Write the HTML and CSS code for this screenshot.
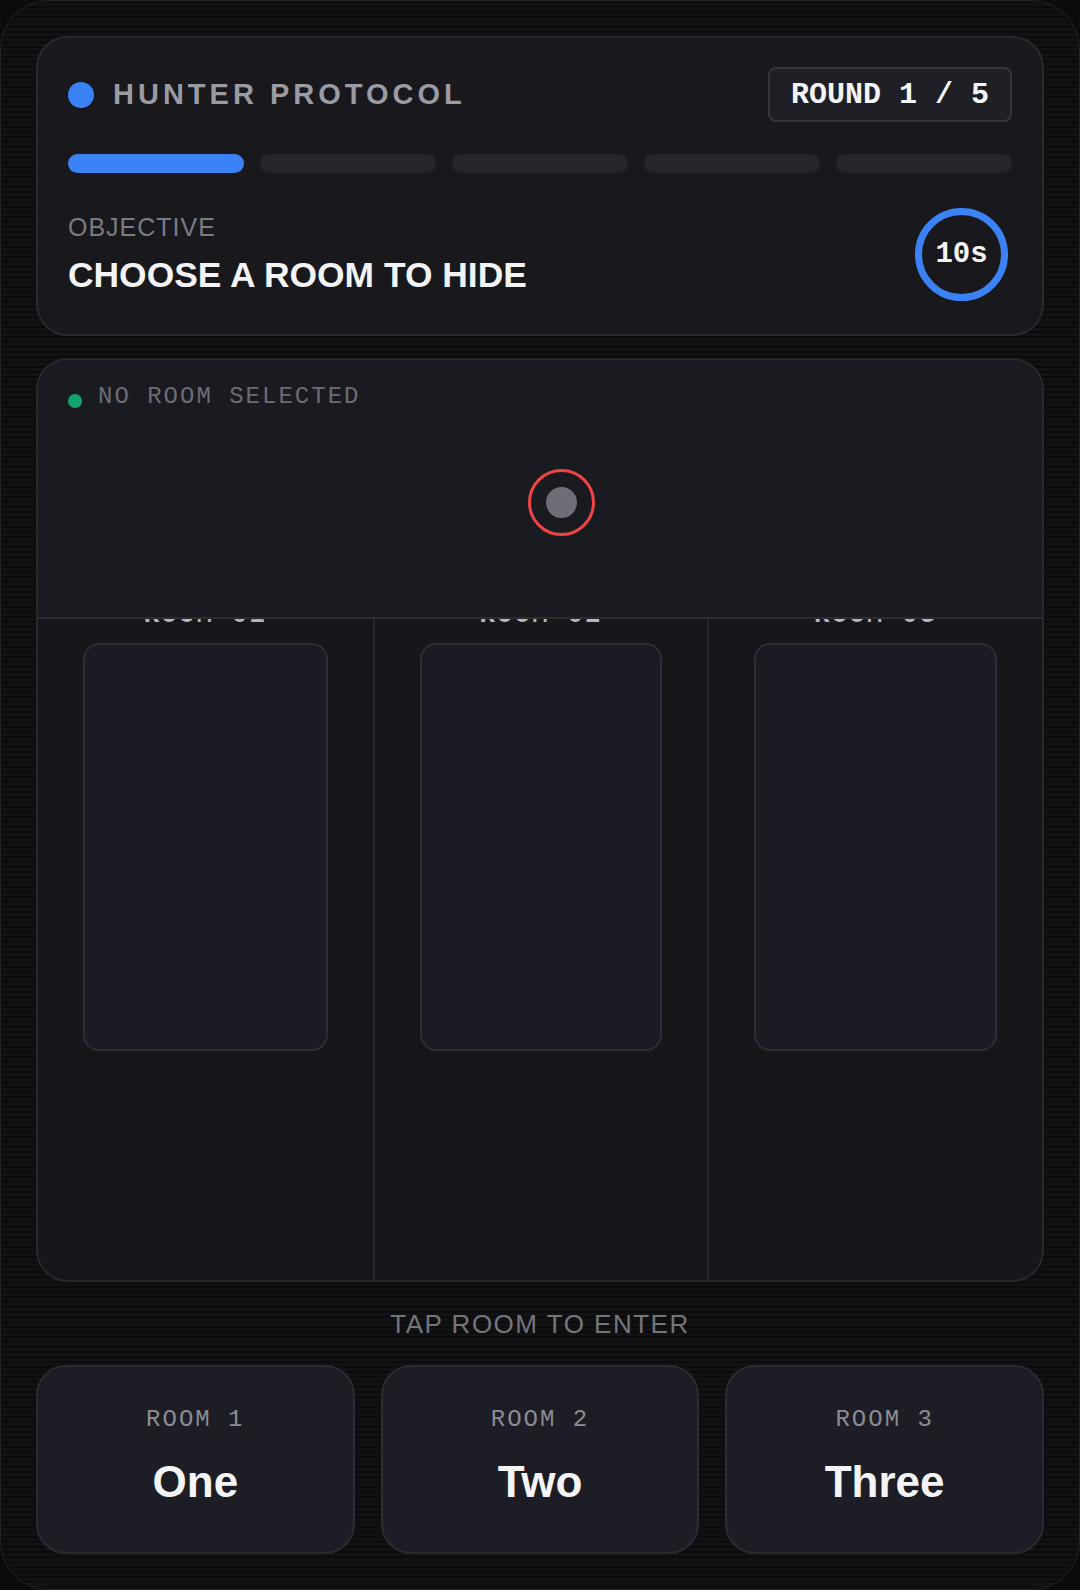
FILE: index.html
```html
<!DOCTYPE html>
<html lang="en">
<head>
    <meta charset="UTF-8">
    <meta name="viewport" content="width=device-width, initial-scale=1.0">
    <title>Hunter Protocol</title>
    <link rel="stylesheet" href="styles.css">
</head>
<body>
    <div class="device">
        <div class="hud">
            <div class="hud-top">
                <div class="brand">
                    <span class="brand-dot"></span>
                    <span class="brand-name">HUNTER PROTOCOL</span>
                </div>
                <div class="round">ROUND 1 / 5</div>
            </div>

            <div class="progress">
                <span class="step active"></span>
                <span class="step"></span>
                <span class="step"></span>
                <span class="step"></span>
                <span class="step"></span>
            </div>

            <div class="objective">
                <div>
                    <div class="objective-label">OBJECTIVE</div>
                    <div class="objective-text">CHOOSE A ROOM TO HIDE</div>
                </div>
                <div class="timer">10s</div>
            </div>
        </div>

        <div class="stage">
            <div class="stage-top">
                <div class="status">
                    <span class="status-dot"></span>
                    <span>NO ROOM SELECTED</span>
                </div>
                <div class="marker"><span class="marker-core"></span></div>
            </div>

            <div class="rooms">
                <div class="room">
                    <div class="room-label">ROOM 01</div>
                    <div class="door"></div>
                </div>
                <div class="room">
                    <div class="room-label">ROOM 02</div>
                    <div class="door"></div>
                </div>
                <div class="room">
                    <div class="room-label">ROOM 03</div>
                    <div class="door"></div>
                </div>
            </div>
        </div>

        <div class="hint">TAP ROOM TO ENTER</div>

        <div class="choices">
            <button class="choice">
                <span class="choice-label">ROOM 1</span>
                <span class="choice-name">One</span>
            </button>
            <button class="choice">
                <span class="choice-label">ROOM 2</span>
                <span class="choice-name">Two</span>
            </button>
            <button class="choice">
                <span class="choice-label">ROOM 3</span>
                <span class="choice-name">Three</span>
            </button>
        </div>
    </div>
</body>
</html>
```

FILE: styles.css
```css
* {
    box-sizing: border-box;
}

body {
    margin: 0;
    background-color: #0b0b0d;
    font-family: "Liberation Sans", Arial, sans-serif;
    color: #f2f2f5;
}

.device {
    width: 1080px;
    height: 1590px;
    padding: 35px 35px 0;
    border: 1px solid #222227;
    border-radius: 48px;
    background-color: #121215;
    background-image: repeating-linear-gradient(180deg, rgba(0, 0, 0, 0.35) 0 2px, transparent 2px 5px);
}

/* top panel */
.hud {
    height: 300px;
    padding: 29px 30px 0;
    border: 2px solid #28282f;
    border-radius: 32px;
    background: #18181d;
}

.hud-top {
    display: flex;
    align-items: center;
    justify-content: space-between;
}

.brand {
    display: flex;
    align-items: center;
    gap: 19px;
}

.brand-dot {
    width: 26px;
    height: 26px;
    border-radius: 50%;
    background: #3b82f6;
}

.brand-name {
    font-size: 29px;
    font-weight: bold;
    letter-spacing: 4px;
    color: #9b9ba3;
}

.round {
    height: 55px;
    padding: 0 21px;
    display: flex;
    align-items: center;
    border: 2px solid #35363d;
    border-radius: 8px;
    background: #1f2026;
    font-family: "Liberation Mono", monospace;
    font-size: 30px;
    font-weight: bold;
    color: #f4f4f6;
}

.progress {
    display: flex;
    gap: 16px;
    margin-top: 32px;
}

.step {
    flex: 1;
    height: 19px;
    border-radius: 10px;
    background: #25262c;
}

.step.active {
    background: #3b82f6;
}

.objective {
    display: flex;
    align-items: center;
    justify-content: space-between;
    margin-top: 35px;
    padding-right: 4px;
}

.objective-label {
    font-size: 25px;
    letter-spacing: 1px;
    color: #7b7b83;
}

.objective-text {
    margin-top: 13px;
    font-size: 35.4px;
    font-weight: bold;
    color: #f3f3f6;
}

.timer {
    width: 93px;
    height: 93px;
    display: flex;
    align-items: center;
    justify-content: center;
    border: 7px solid #3b82f6;
    border-radius: 50%;
    font-family: "Liberation Mono", monospace;
    font-size: 29px;
    font-weight: bold;
    color: #f4f4f6;
}

/* game area */
.stage {
    position: relative;
    height: 924px;
    margin-top: 22px;
    display: flex;
    flex-direction: column;
    border: 2px solid #28282f;
    border-radius: 32px;
    background: #17171b;
    overflow: hidden;
}

.stage-top {
    position: relative;
    z-index: 2;
    height: 259px;
    padding: 23px 30px;
    border-bottom: 2px solid #2b2c33;
    background: #1a1b21;
}

.status {
    display: flex;
    align-items: center;
    gap: 16px;
    font-family: "Liberation Mono", monospace;
    font-size: 24px;
    letter-spacing: 2px;
    color: #6c6c74;
}

.status-dot {
    width: 14px;
    height: 14px;
    margin-top: 8px;
    border-radius: 50%;
    background: #12a46c;
}

.marker {
    position: absolute;
    left: 490px;
    top: 109px;
    width: 67px;
    height: 67px;
    display: flex;
    align-items: center;
    justify-content: center;
    border: 3px solid #ef4444;
    border-radius: 50%;
}

.marker-core {
    width: 31px;
    height: 31px;
    border-radius: 50%;
    background: #6e6e78;
}

.rooms {
    flex: 1;
    display: grid;
    grid-template-columns: 1fr 1fr 1fr;
}

.room {
    padding: 0 45px;
    border-left: 2px solid #25262c;
}

.room:first-child {
    border-left: none;
}

.room-label {
    margin-top: -17px;
    height: 26px;
    line-height: 26px;
    text-align: center;
    font-family: "Liberation Mono", monospace;
    font-size: 26px;
    font-weight: bold;
    letter-spacing: 2px;
    color: #b5b6be;
}

.door {
    height: 408px;
    margin-top: 15px;
    border: 2px solid #2d2e36;
    border-radius: 16px;
    background: #1b1c23;
}

.hint {
    margin-top: 27px;
    line-height: 30px;
    text-align: center;
    font-size: 26px;
    letter-spacing: 1.5px;
    color: #75757d;
}

.choices {
    display: grid;
    grid-template-columns: 1fr 1fr 1fr;
    gap: 26px;
    margin-top: 26px;
}

.choice {
    height: 189px;
    padding-bottom: 7px;
    display: flex;
    flex-direction: column;
    align-items: center;
    justify-content: center;
    gap: 24px;
    border: 2px solid #2a2b33;
    border-radius: 30px;
    background: #1c1d25;
    font-family: inherit;
    cursor: pointer;
}

.choice-label {
    font-family: "Liberation Mono", monospace;
    font-size: 24px;
    letter-spacing: 2px;
    color: #8c8c94;
}

.choice-name {
    font-size: 44px;
    font-weight: bold;
    color: #f4f4f6;
}
```
